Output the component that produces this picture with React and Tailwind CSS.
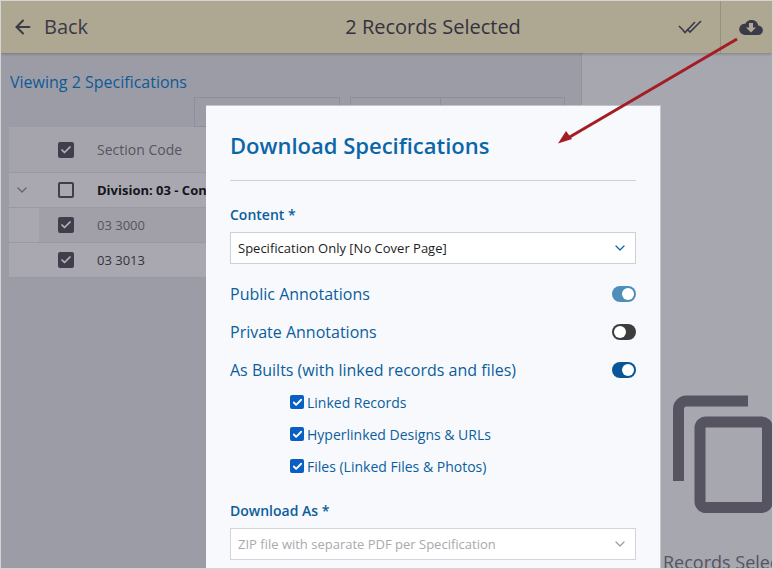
import { ArrowLeft, ChevronDown, Check } from 'lucide-react';

const font = { fontFamily: '"Open Sans", "Noto Sans", sans-serif' };

function TableCheck({ checked }) {
  if (!checked) return <div className="w-4 h-4 rounded-[2px] border-2 border-[#3f3e4a]" />;
  return (
    <div className="w-4 h-4 rounded-[2px] bg-[#3f3e4a] flex items-center justify-center">
      <Check size={12} strokeWidth={3.5} className="text-[#b5b4bb]" />
    </div>
  );
}

function Toggle({ track, on }) {
  return (
    <div className={`w-6 h-4 rounded-full flex items-center px-[2px] ${track} ${on ? 'justify-end' : 'justify-start'}`}>
      <div className="w-3 h-3 rounded-full bg-white" />
    </div>
  );
}

function ToggleRow({ label, track, on }) {
  return (
    <div className="flex items-center justify-between h-[38px]">
      <span className="text-[16px] text-[#0b5e9e]">{label}</span>
      <Toggle track={track} on={on} />
    </div>
  );
}

function SubCheck({ label }) {
  return (
    <div className="flex items-center h-8 pl-[60px]">
      <div className="w-[14px] h-[14px] rounded-[2px] bg-[#0a5fc4] flex items-center justify-center mr-[3px]">
        <Check size={11} strokeWidth={4} className="text-white" />
      </div>
      <span className="text-[14px] text-[#0b5e9e]">{label}</span>
    </div>
  );
}

function Row({ code, dim }) {
  return (
    <div className="flex h-[35px] bg-[#a9a8b0] border-b border-[#9a99a2] items-center">
      <div className="w-[30px] h-full" />
      <div className={`flex-1 h-full flex items-center ${dim ? 'bg-[#a1a0a9]' : ''}`}>
        <div className="w-[19px]" />
        <TableCheck checked />
        <span className={`ml-[23px] pt-[2px] text-[13px] ${dim ? 'text-[#55545f]' : 'text-[#33323d]'}`}>{code}</span>
      </div>
    </div>
  );
}

export default function App() {
  return (
    <div style={font} className="relative w-[773px] h-[569px] overflow-hidden flex flex-col border border-[#d4d4d4] bg-[#a7a7af]">
      {/* header */}
      <div className="h-[52px] shrink-0 bg-[#aea792] flex items-center shadow-[0_1px_3px_rgba(0,0,0,0.25)] z-10">
        <ArrowLeft size={22} strokeWidth={2.2} className="ml-[11px] text-[#3b3a47]" />
        <span className="ml-[10px] text-[20px] text-[#3b3a47]">Back</span>
        <div className="flex-1 text-center text-[20px] text-[#33323d] pl-[100px]">2 Records Selected</div>
        <svg width="24" height="14" viewBox="0 0 24 14" fill="none" stroke="#3b3a47" strokeWidth="1.6" className="mr-[18px]">
          <path d="M1 6l5 5 M5 10.500l2 2L17 2 M9 9l3 3L23 1" />
        </svg>
        <div className="w-[52px] h-full border-l border-[#97917f] flex items-center justify-end pr-[8px]">
          <svg width="26" height="17" viewBox="0 0 24 17">
            <path fill="#3b3a47" d="M19.3 6.600A7 7 0 0 0 6.200 4.700 5.600 5.600 0 0 0 5.500 16H19a4.700 4.700 0 0 0 .3-9.400z" />
            <path fill="#aea792" d="M10 4h4v4.500h3l-5 5-5-5h3z" />
          </svg>
        </div>
      </div>

      {/* body */}
      <div className="flex flex-1 min-h-0">
        <div className="w-[581px] shrink-0 bg-[#9c9ca6] border-r border-[#94949d] px-[8px]">
          <p className="ml-px mt-[18px] text-[16px] leading-[22px] text-[#0f5a96]">Viewing 2 Specifications</p>
          <div className="flex mt-[4px] h-[30px] ml-[185px] gap-[10px]">
            <div className="w-[146px] border border-[#8f8f98]" />
            <div className="w-[215px] flex border border-[#8f8f98]">
              <div className="w-[90px] border-r border-[#8f8f98]" />
            </div>
          </div>
          <div className="w-full">
            <div className="flex items-center h-[46px] bg-[#a5a4ad] border-b border-[#9a99a2]">
              <div className="w-[49px]" />
              <TableCheck checked />
              <span className="ml-[23px] text-[14px] text-[#55545f]">Section Code</span>
            </div>
            <div className="flex items-center h-[35px] bg-[#a9a8b0] border-b border-[#9a99a2]">
              <ChevronDown size={16} strokeWidth={2} className="ml-[5px] text-[#65656f]" />
              <div className="w-[28px]" />
              <TableCheck />
              <span className="ml-[23px] pt-px text-[13px] font-bold text-[#14141a] whitespace-nowrap">Division: 03 - Concrete</span>
            </div>
            <Row code="03 3000" dim />
            <Row code="03 3013" />
          </div>
        </div>

        <div className="flex-1 min-w-0 flex flex-col items-start pl-[91px] pt-[342px]">
          <svg width="100" height="118" viewBox="0 0 100 118" className="shrink-0">
            <path fill="none" stroke="#555460" strokeWidth="11" d="M5.500 86V14a8 8 0 0 1 8-8H75" />
            <rect x="27" y="27" width="67.500" height="85.500" rx="6" fill="none" stroke="#555460" strokeWidth="11" />
          </svg>
          <span className="-ml-[10px] mt-[37px] text-[18px] leading-[24px] text-[#555460] whitespace-nowrap">Records Selected</span>
        </div>
      </div>

      {/* modal */}
      <div className="absolute left-[205px] top-[104px] w-[455px] h-[470px] z-20 bg-[#f8f9fc] border-r border-t border-[#c4c4cc] px-[24px]">
        <h2 className="mt-[21px] text-[22px] leading-[36px] font-semibold text-[#0b66a8]">Download Specifications</h2>
        <div className="mt-[17px] border-t border-[#cfcfd6]" />
        <p className="mt-[24px] text-[14px] leading-[20px] font-semibold text-[#0b5e9e]">Content *</p>
        <div className="mt-[7px] h-8 bg-white border border-[#cfcfd4] flex items-center justify-between px-[7px]">
          <span className="pt-px text-[13px] text-[#1c1c22]">Specification Only [No Cover Page]</span>
          <ChevronDown size={16} strokeWidth={2} className="text-[#0b6fb0]" />
        </div>
        <div className="mt-[11px]">
          <ToggleRow label="Public Annotations" track="bg-[#4f8dba]" on />
          <ToggleRow label="Private Annotations" track="bg-[#3d3d3d]" />
          <ToggleRow label="As Builts (with linked records and files)" track="bg-[#0a5596]" on />
        </div>
        <div className="-mt-[3px]">
          <SubCheck label="Linked Records" />
          <SubCheck label="Hyperlinked Designs & URLs" />
          <SubCheck label="Files (Linked Files & Photos)" />
        </div>
        <p className="mt-[19px] text-[14px] leading-[20px] font-semibold text-[#0b5e9e]">Download As *</p>
        <div className="mt-[7px] h-8 bg-white border border-[#d4d4d8] flex items-center justify-between px-[7px]">
          <span className="pt-px text-[13px] text-[#a9a9ae]">ZIP file with separate PDF per Specification</span>
          <ChevronDown size={16} strokeWidth={2} className="text-[#a0a0a6]" />
        </div>
      </div>

      {/* red annotation arrow */}
      <svg className="absolute -left-px -top-px z-30 pointer-events-none" width="773" height="569">
        <line x1="737" y1="39" x2="568" y2="138" stroke="#a31d24" strokeWidth="3" />
        <path d="M558 143.500l14-4.500-6-8z" fill="#a31d24" />
      </svg>
    </div>
  );
}
